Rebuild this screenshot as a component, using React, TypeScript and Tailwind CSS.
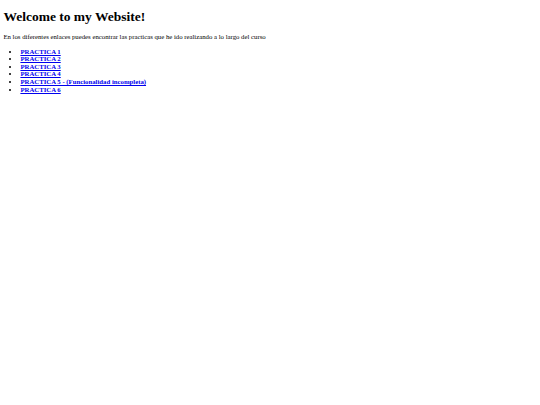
export default function App() {
  const items = [
    "PRACTICA 1",
    "PRACTICA 2",
    "PRACTICA 3",
    "PRACTICA 4",
    "PRACTICA 5 - (Funcionalidad incompleta)",
    "PRACTICA 6",
  ];
  return (
    <div
      className="min-h-[405px] bg-white px-[3.4px] py-[9px] text-black"
      style={{ fontFamily: '"Liberation Serif", "Times New Roman", serif' }}
    >
      <h1 className="mb-[8px] text-[13.5px] leading-[normal] font-bold">Welcome to my Website!</h1>
      <p className="my-[6.75px] text-[6.75px] leading-[normal]">
        En los diferentes enlaces puedes encontrar las practicas que he ido realizando a lo largo del curso
      </p>
      <ul className="mt-[7.5px] mb-[6.75px] list-disc pl-[17px] text-[6.75px] leading-[7.65px]">
        {items.map((t) => (
          <li key={t}>
            <a href="#" className="font-bold text-[#0000ee] underline">
              {t}
            </a>
          </li>
        ))}
      </ul>
    </div>
  );
}
